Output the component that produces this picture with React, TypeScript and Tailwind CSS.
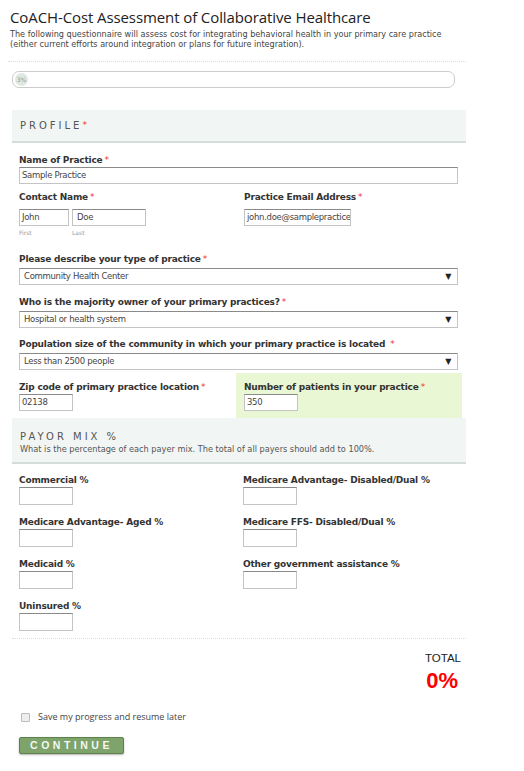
import React from "react";

const LABEL = "block text-[9px] font-bold text-[#333] leading-[12px] font-['DejaVu_Sans',sans-serif] tracking-[-0.2px]";
const INPUT = "block h-[17px] border border-[#c4c4c4] border-t-[#8a8a8a] bg-white px-[2px] text-[8.5px] text-[#444] leading-[15px] font-['DejaVu_Sans',sans-serif] tracking-[-0.3px]";

function Star() {
  return <span className="text-[#e33] ml-[2px] font-normal">*</span>;
}

function Select({ value }: { value: string }) {
  return (
    <div className={`${INPUT} flex items-center justify-between w-[439px] pl-[4px] pr-[6px]`}>
      <span>{value}</span>
      <span className="text-[8px] text-[#222]">▼</span>
    </div>
  );
}

function PctField({ label }: { label: string }) {
  return (
    <div>
      <label className={`${LABEL} font-semibold`}>{label}</label>
      <div className={`${INPUT} w-[54px] mt-[1px] h-[18px]`} />
    </div>
  );
}

export default function App() {
  return (
    <div className="w-[524px] min-h-[771px] bg-white font-['DejaVu_Sans',sans-serif]">
      <div className="pl-[10px] pt-[8px] w-[470px]">
        <h1 className="text-[15px] leading-[18px] text-[#222] font-['Open_Sans',sans-serif] tracking-[-0.1px]">
          CoACH-Cost Assessment of Collaborative Healthcare
        </h1>
        <p className="mt-[3px] text-[8.1px] leading-[10px] text-[#444]">
          The following questionnaire will assess cost for integrating behavioral health in your primary care practice<br />
          (either current efforts around integration or plans for future integration).
        </p>
        <div className="mt-[12px] border-t border-dotted border-[#ddd] w-[458px] -ml-[2px]" />

        <div className="mt-[9px] ml-[2px] h-[17px] w-[443px] rounded-[7px] border border-[#ccc] flex items-center px-[2px]">
          <span className="rounded-full bg-[#dfe8e0] w-[13px] h-[13px] flex items-center justify-center text-[6px] text-[#999]">3%</span>
        </div>

        <div className="mt-[22px] ml-[2px] w-[454px] h-[33px] bg-[#f1f5f4] border-b-2 border-[#d5ddd8] flex items-center pl-[8px]">
          <span className="text-[10px] tracking-[3px] text-[#555]">PROFILE</span>
          <span className="text-[#e33] text-[9px]">*</span>
        </div>

        <div className="pl-[9px] pt-[11px]">
          <label className={LABEL}>Name of Practice<Star /></label>
          <div className={`${INPUT} w-[439px] mt-[1px]`}>Sample Practice</div>

          <div className="flex mt-[7px]">
            <div className="w-[225px]">
              <label className={LABEL}>Contact Name<Star /></label>
              <div className="flex gap-[3px] mt-[6px]">
                <div>
                  <div className={`${INPUT} w-[50px]`}>John</div>
                  <div className="text-[6px] text-[#999] mt-[2px]">First</div>
                </div>
                <div>
                  <div className={`${INPUT} w-[74px] pl-[4px]`}>Doe</div>
                  <div className="text-[6px] text-[#999] mt-[2px]">Last</div>
                </div>
              </div>
            </div>
            <div>
              <label className={LABEL}>Practice Email Address<Star /></label>
              <div className={`${INPUT} w-[107px] mt-[6px] overflow-hidden whitespace-nowrap`}>john.doe@samplepractice</div>
            </div>
          </div>

          <div className="mt-[16px]">
            <label className={LABEL}>Please describe your type of practice<Star /></label>
            <div className="mt-[3px]"><Select value="Community Health Center" /></div>
          </div>
          <div className="mt-[11px]">
            <label className={LABEL}>Who is the majority owner of your primary practices?<Star /></label>
            <div className="mt-[3px]"><Select value="Hospital or health system" /></div>
          </div>
          <div className="mt-[10px]">
            <label className={LABEL}>Population size of the community in which your primary practice is located <Star /></label>
            <div className="mt-[3px]"><Select value="Less than 2500 people" /></div>
          </div>
        </div>

        <div className="flex mt-[3px]">
          <div className="w-[226px] pl-[9px] pt-[8px]">
            <label className={LABEL}>Zip code of primary practice location<Star /></label>
            <div className={`${INPUT} w-[54px] mt-[1px] bg-[#fafcc8]`}>02138</div>
          </div>
          <div className="w-[226px] bg-[#eaf7d4] pl-[8px] pt-[8px] pb-[7px]">
            <label className={LABEL}>Number of patients in your practice<Star /></label>
            <div className={`${INPUT} w-[54px] mt-[1px]`}>350</div>
          </div>
        </div>

        <div className="ml-[2px] w-[454px] h-[46px] bg-[#f1f5f4] border-b-2 border-[#d5ddd8] pl-[8px] pt-[13px]">
          <div className="text-[10px] tracking-[3px] text-[#555] leading-[12px]">PAYOR MIX %</div>
          <div className="text-[8.2px] text-[#555] leading-[10px] mt-[1px]">What is the percentage of each payer mix. The total of all payers should add to 100%.</div>
        </div>

        <div className="pl-[9px] pt-[10px] grid grid-cols-[224px_1fr] gap-y-[11px]">
          <PctField label="Commercial %" />
          <PctField label="Medicare Advantage- Disabled/Dual %" />
          <PctField label="Medicare Advantage- Aged %" />
          <PctField label="Medicare FFS- Disabled/Dual %" />
          <PctField label="Medicaid %" />
          <PctField label="Other government assistance %" />
          <PctField label="Uninsured %" />
        </div>

        <div className="mt-[7px] ml-[2px] border-t border-dotted border-[#ddd] w-[454px]" />

        <div className="flex flex-col items-end w-[451px] mt-[12px] font-['Liberation_Sans',sans-serif]">
          <div className="text-[11.5px] leading-[14px] text-[#222]">TOTAL</div>
          <div className="text-[22px] leading-[24px] font-bold text-[#f00] mr-[3px] mt-[4px]">0%</div>
        </div>

        <div className="flex items-center pl-[11px] mt-[18px]">
          <span className="w-[9px] h-[9px] border border-[#bbb] bg-[#eee] rounded-[1px]" />
          <span className="ml-[8px] text-[9px] leading-[12px] text-[#444] font-['Open_Sans',sans-serif]">Save my progress and resume later</span>
        </div>

        <button className="ml-[9px] mt-[14px] w-[105px] h-[17px] bg-[#7ea36b] border border-[#5d8249] rounded-[2px] shadow-[0_1px_2px_rgba(0,0,0,0.3)] text-[#f4f8f0] text-[10.5px] font-bold tracking-[3.5px] leading-[15px] font-['Liberation_Sans',sans-serif]">
          CONTINUE
        </button>
      </div>
    </div>
  );
}
